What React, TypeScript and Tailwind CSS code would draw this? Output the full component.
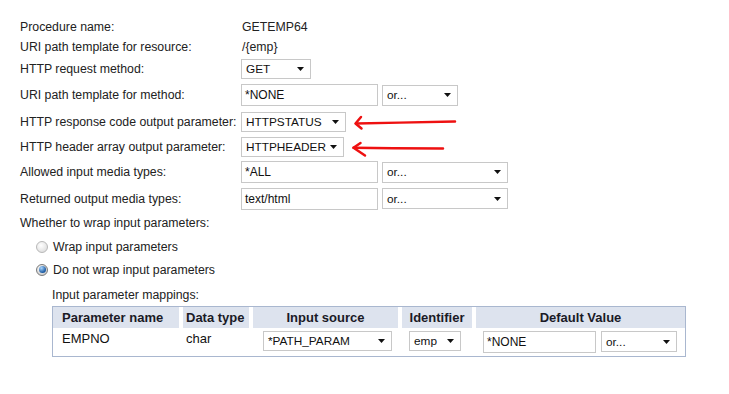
import React from "react";

function Caret() {
  return (
    <svg width="7" height="4" viewBox="0 0 7 4" className="shrink-0">
      <path d="M0 0h7L3.5 4z" fill="#111" />
    </svg>
  );
}

function FakeSelect({ value, width, height = 20 }: { value: string; width: number; height?: number }) {
  return (
    <div
      className="flex items-center justify-between gap-[4px] border border-[#c8c8c8] bg-white pl-[4px] pr-[6px] text-[11.8px] text-[#111]"
      style={{ width, height }}
    >
      <span className="whitespace-nowrap">{value}</span>
      <Caret />
    </div>
  );
}

function TextBox({ value, width }: { value: string; width: number }) {
  return (
    <div
      className="flex h-[22px] items-center border border-[#c8c8c8] bg-white pl-[3px] text-[12px] text-[#111]"
      style={{ width }}
    >
      {value}
    </div>
  );
}

function Radio({ checked }: { checked?: boolean }) {
  if (checked) {
    return (
      <span className="flex h-[12px] w-[12px] items-center justify-center rounded-full border border-[#7a7a7a] bg-[radial-gradient(circle_at_40%_35%,#ffffff,#bdbdbd)]">
        <span className="h-[7px] w-[7px] rounded-full bg-[radial-gradient(circle_at_35%_30%,#a8d6ff,#1a58a0_70%)]" />
      </span>
    );
  }
  return (
    <span className="h-[12px] w-[12px] rounded-full border border-[#b8b8b8] bg-[radial-gradient(circle_at_40%_35%,#ffffff,#d6d6d6)]" />
  );
}

function Row({ label, h, children }: { label: string; h: number; children?: React.ReactNode }) {
  return (
    <div className="grid grid-cols-[221px_1fr] items-center" style={{ height: h }}>
      <span className="whitespace-nowrap">{label}</span>
      <div className="flex items-center gap-[4px]">{children}</div>
    </div>
  );
}

export default function App() {
  return (
    <div className="relative h-[394px] w-[729px] overflow-hidden bg-white font-['Liberation_Sans',Arial,sans-serif] text-[12.3px] leading-[16px] text-[#222]">
      <div className="pl-[20px] pt-[17px]">
        <Row label="Procedure name:" h={20}>
          <span className="pl-[1px]">GETEMP64</span>
        </Row>
        <Row label="URI path template for resource:" h={20}>
          <span className="pl-[1px]">/{"{emp}"}</span>
        </Row>
        <Row label="HTTP request method:" h={24}>
          <FakeSelect value="GET" width={70} />
        </Row>
        <Row label="URI path template for method:" h={28}>
          <TextBox value="*NONE" width={137} />
          <FakeSelect value="or..." width={76} height={21} />
        </Row>
        <Row label="HTTP response code output parameter:" h={25}>
          <FakeSelect value="HTTPSTATUS" width={105} />
        </Row>
        <Row label="HTTP header array output parameter:" h={25}>
          <FakeSelect value="HTTPHEADER" width={103} />
        </Row>
        <Row label="Allowed input media types:" h={26}>
          <TextBox value="*ALL" width={137} />
          <FakeSelect value="or..." width={126} height={21} />
        </Row>
        <Row label="Returned output media types:" h={27}>
          <TextBox value="text/html" width={137} />
          <FakeSelect value="or..." width={126} height={21} />
        </Row>
        <div className="flex h-[22px] items-center">Whether to wrap input parameters:</div>
        <div className="flex h-[25px] items-center gap-[5px] pl-[16px]">
          <Radio />
          <span>Wrap input parameters</span>
        </div>
        <div className="flex h-[21px] items-center gap-[5px] pl-[16px]">
          <Radio checked />
          <span>Do not wrap input parameters</span>
        </div>

        {/* Input parameter mappings */}
        <div className="pl-[32px] pt-[7px]">
          <div className="mb-[3px]">Input parameter mappings:</div>
          <div className="w-[634px] border border-[#a9b7cf]">
            <div className="grid h-[21px] grid-cols-[126px_66px_145px_70px_209px] gap-x-[4px] text-[13px] font-bold text-[#1a1a26]">
              <div className="flex items-center bg-[#dde3ee] pl-[9px]">Parameter name</div>
              <div className="flex items-center bg-[#dde3ee] pl-[3px]">Data type</div>
              <div className="flex items-center justify-center bg-[#dde3ee]">Input source</div>
              <div className="flex items-center justify-center bg-[#dde3ee]">Identifier</div>
              <div className="flex items-center justify-center bg-[#dde3ee]">Default Value</div>
            </div>
            <div className="grid h-[28px] grid-cols-[126px_66px_145px_70px_209px] gap-x-[4px] text-[13px] text-[#111]">
              <div className="pl-[9px] pt-[3px]">EMPNO</div>
              <div className="pl-[3px] pt-[3px]">char</div>
              <div className="pl-[10px] pt-[3px]">
                <FakeSelect value="*PATH_PARAM" width={129} />
              </div>
              <div className="pl-[7px] pt-[3px]">
                <FakeSelect value="emp" width={52} />
              </div>
              <div className="flex gap-[5px] pl-[7px] pt-[3px]">
                <TextBox value="*NONE" width={113} />
                <FakeSelect value="or..." width={76} height={21} />
              </div>
            </div>
          </div>
        </div>
      </div>

      {/* hand-drawn annotation arrows */}
      <svg className="pointer-events-none absolute left-0 top-0" width="729" height="394">
        <g fill="none" stroke="#ee1111" strokeWidth="2.5" strokeLinecap="round" strokeLinejoin="round">
          <path d="M455 121.5 C420 122 390 123 356 123.5" />
          <path d="M361 117 L355.5 123.5 L361.5 128.5" />
          <path d="M443 148.5 C410 148.5 385 148 353.5 147.8" />
          <path d="M360.5 143 L353.5 147.8 L365 155.5" />
        </g>
      </svg>
    </div>
  );
}
